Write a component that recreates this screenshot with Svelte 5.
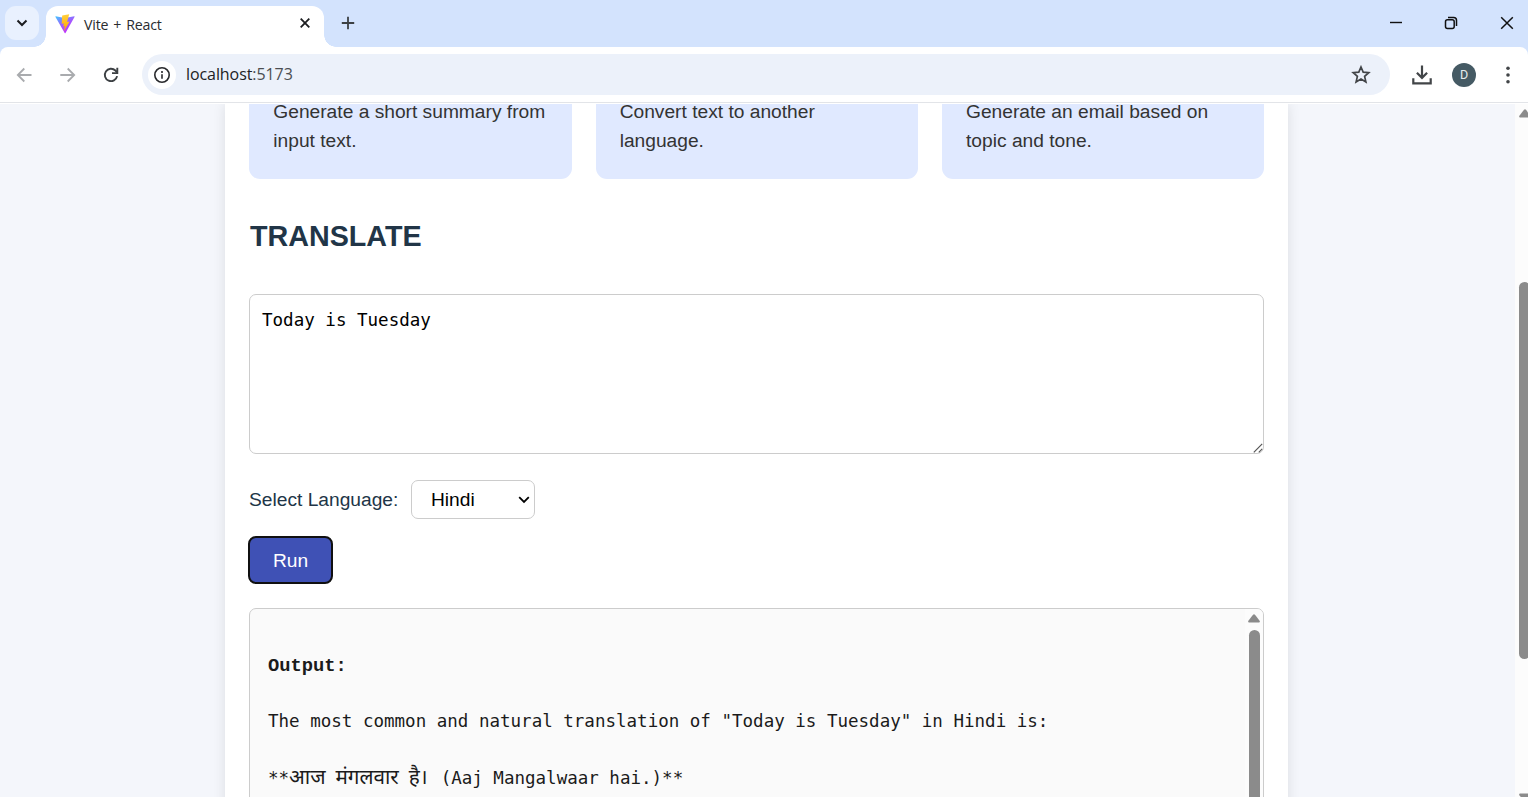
<script>
  const cards = [
    ['Generate a short summary from', 'input text.'],
    ['Convert text to another', 'language.'],
    ['Generate an email based on', 'topic and tone.']
  ];
</script>

<div class="window">
  <header class="tabs">
    <button class="search" aria-label="Search tabs">
      <svg width="12" height="8" viewBox="0 0 12 8"><path d="M1.500 1.500 6 6l4.500-4.500" fill="none" stroke="#1c1d20" stroke-width="2" /></svg>
    </button>
    <div class="tab">
      <svg class="vite" width="20" height="20" viewBox="0 0 20 20">
        <defs>
          <linearGradient id="v" x1="0" y1="0" x2=".6" y2="1"><stop offset="0" stop-color="#41c6ff" /><stop offset=".55" stop-color="#a259ff" /><stop offset="1" stop-color="#c32bff" /></linearGradient>
          <linearGradient id="b" x1="0" y1="0" x2="0" y2="1"><stop offset="0" stop-color="#ffcf3c" /><stop offset="1" stop-color="#ffa800" /></linearGradient>
        </defs>
        <path d="M.7 2.300 9.700 4l9.600-1.700q.5 0 .2.600L10.500 19q-.4.600-.8 0L.5 2.900q-.2-.5.2-.6z" fill="url(#v)" />
        <path d="m14.200.3-7 1.300-.5 8.200 2.200-.4-.7 3.200 1.700-.5-1 5.200 5.700-9.800-2.500.5z" fill="url(#b)" />
      </svg>
      <span class="title">Vite + React</span>
      <svg class="close" width="12" height="12" viewBox="0 0 12 12"><path d="m1.700 1.700 8.600 8.600m0-8.600-8.600 8.600" stroke="#1c1d20" stroke-width="1.800" /></svg>
    </div>
    <svg class="plus" width="14" height="14" viewBox="0 0 14 14"><path d="M7 .8v12.400M.8 7h12.400" stroke="#3c4043" stroke-width="1.800" /></svg>
    <div class="controls">
      <svg width="12" height="14" viewBox="0 0 12 14"><path d="M0 6.500h12" stroke="#111" stroke-width="1.400" /></svg>
      <svg width="14" height="14" viewBox="0 0 14 14" fill="none" stroke="#111" stroke-width="1.500"><rect x="1.500" y="3.700" width="8.700" height="8.700" rx="2" /><path d="M4 1.500h5.700q2.800 0 2.800 2.800V10" /></svg>
      <svg width="14" height="14" viewBox="0 0 14 14"><path d="m1.200 1.200 11.600 11.600m0-11.600L1.200 12.800" stroke="#111" stroke-width="1.500" /></svg>
    </div>
  </header>

  <nav class="toolbar">
    <svg width="16" height="16" viewBox="0 0 16 16" fill="none" stroke="#a9abae" stroke-width="1.800"><path d="M15.500 8H2M8.300 1.500 1.800 8l6.500 6.500" /></svg>
    <svg class="fwd" width="16" height="16" viewBox="0 0 16 16" fill="none" stroke="#a9abae" stroke-width="1.800"><path d="M.3 8H14M7.700 1.500 14.200 8l-6.500 6.500" /></svg>
    <svg class="reload" width="16" height="16" viewBox="0 0 16 16" fill="none" stroke="#3c4043" stroke-width="1.900"><path d="M14.100 9.100A6.200 6.200 0 1 1 12.400 3.500L14.200 5.500" /><path d="M14.300.8v5.300H9" /></svg>
    <div class="address">
      <span class="info"><svg width="18" height="18" viewBox="0 0 18 18"><circle cx="9" cy="9" r="7.200" fill="none" stroke="#28292c" stroke-width="1.600" /><path d="M9 8.200v4.500M9 5.100v1.800" stroke="#28292c" stroke-width="1.600" /></svg></span>
      <span class="url">localhost<span>:5173</span></span>
      <svg class="star" width="20" height="19" viewBox="0 0 20 19"><path d="m10 2 2.200 5.200 5.600.5-4.200 3.700 1.300 5.500-4.900-2.900-4.900 2.900 1.300-5.500-4.200-3.700 5.600-.5z" fill="none" stroke="#424548" stroke-width="1.700" /></svg>
    </div>
    <svg class="download" width="20" height="20" viewBox="0 0 20 20" fill="none" stroke="#424548" stroke-width="2.200"><path d="M10 .5V13M4.900 7.800l5.100 5.100 5.100-5.100M1.300 13.200v5.100h17.400v-5.100" /></svg>
    <span class="avatar">D</span>
    <svg class="dots" width="4" height="18" viewBox="0 0 4 18" fill="#424548"><circle cx="2" cy="2.200" r="1.800" /><circle cx="2" cy="9" r="1.800" /><circle cx="2" cy="15.800" r="1.800" /></svg>
  </nav>

  <div class="page">
    <main>
      <section class="cards">
        {#each cards as card}
          <article>{card[0]}<br />{card[1]}</article>
        {/each}
      </section>
      <h2>TRANSLATE</h2>
      <div class="input">
        <span>Today is Tuesday</span>
        <svg class="grip" width="10" height="10" viewBox="0 0 10 10"><path d="M.8 9.300 9.200.9M5.800 9.300l3.400-3.400" stroke="#555" stroke-width="1.200" /></svg>
      </div>
      <div class="language">
        <span class="label">Select Language:</span>
        <div class="select"><span>Hindi</span><svg width="12" height="8" viewBox="0 0 12 8"><path d="m1.200 1.200 4.800 4.800 4.800-4.800" fill="none" stroke="#000" stroke-width="1.800" /></svg></div>
      </div>
      <button class="run">Run</button>
      <section class="output">
        <div class="result">
          <strong>Output:</strong>
          <p>The most common and natural translation of "Today is Tuesday" in Hindi is:</p>
          <p class="answer">**<span class="hindi">आज मंगलवार है।</span> (Aaj Mangalwaar hai.)**</p>
        </div>
        <div class="inner-scroll">
          <svg width="12" height="9" viewBox="0 0 12 9"><path d="M5 .8q1-1.200 2 0l4.600 6q.8 1.700-.8 1.700H1.200Q-.4 8.500.4 6.800z" fill="#8b8b8b" /></svg>
          <i></i>
        </div>
      </section>
    </main>
    <aside>
      <svg width="12" height="9" viewBox="0 0 12 9"><path d="M5 .8q1-1.200 2 0l4.600 6q.8 1.700-.8 1.700H1.200Q-.4 8.500.4 6.800z" fill="#8b8b8b" /></svg>
      <i></i>
      <svg class="down" width="12" height="9" viewBox="0 0 12 9"><path d="M5 8.200q1 1.200 2 0l4.600-6Q12.400.5 10.800.5H1.200Q-.4.500.4 2.200z" fill="#8b8b8b" /></svg>
    </aside>
  </div>
</div>

<style>
  :global(body) { margin: 0; overflow: hidden; }
  * { box-sizing: border-box; }
  svg { display: block; flex: none; }
  button { border: 0; padding: 0; }
  .window { width: 1528px; height: 797px; overflow: hidden; display: flex; flex-direction: column; background: #d3e3fd; font-family: "Liberation Sans", Arial, sans-serif; }
  .tabs { height: 47px; flex: none; display: flex; background: #d3e3fd; }
  .search { width: 34px; height: 34px; margin: 6px 7px 0 5px; border-radius: 11px; background: #e9f1fe; display: flex; align-items: center; justify-content: center; }
  .tab { position: relative; width: 278px; height: 41px; margin-top: 6px; padding: 0 13px 0 9px; border-radius: 12px 12px 0 0; background: #fff; display: flex; align-items: center; }
  .tab::before, .tab::after { content: ''; position: absolute; bottom: 0; width: 12px; height: 12px; }
  .tab::before { left: -12px; background: radial-gradient(circle at 0 0, transparent 11.5px, #fff 12px); }
  .tab::after { right: -12px; background: radial-gradient(circle at 100% 0, transparent 11.5px, #fff 12px); }
  .vite { margin-top: -6px; }
  .title { margin: -5px 0 0 9px; font: 14.200px "Open Sans", "Noto Sans", sans-serif; color: #2a2c2f; letter-spacing: -.2px; word-spacing: 1.500px; white-space: nowrap; }
  .close { margin: -7px 0 0 auto; }
  .plus { margin: 16px 0 0 17px; }
  .controls { margin: 16px 14.500px 0 auto; display: flex; gap: 42px; }
  .toolbar { height: 56px; flex: none; padding-left: 16px; border-bottom: 1px solid #e2e4e8; border-radius: 8px 8px 0 0; display: flex; align-items: center; background: #fff; }
  .fwd { margin-left: 28px; }
  .reload { margin-left: 27px; }
  .address { width: 1248px; height: 41px; margin-left: 23px; padding: 0 19px 0 6px; border-radius: 21px; background: #ecf1fa; display: flex; align-items: center; }
  .info { width: 28px; height: 28px; border-radius: 50%; background: #fff; display: flex; align-items: center; justify-content: center; }
  .url { margin: -1px 0 0 10px; font: 16px "Open Sans", "Noto Sans", sans-serif; letter-spacing: -.08px; color: #202124; }
  .url span { color: #4b4e52; }
  .star { margin-left: auto; }
  .download { margin-left: 22px; }
  .avatar { width: 24px; height: 24px; margin-left: 20px; border-radius: 50%; background: #455a64; color: #e5eaec; display: flex; align-items: center; justify-content: center; font: 12.500px Roboto, sans-serif; }
  .dots { margin-left: 29.500px; }
  .page { flex: 1; min-height: 0; border-top: 1px solid #fff; display: flex; background: #f4f6fb; overflow: hidden; }
  main { width: 1063px; height: 900px; margin-left: 225px; padding: 0 24px; background: #fff; box-shadow: 0 0 12px rgba(0, 0, 0, .1); }
  .cards { display: grid; grid-template-columns: repeat(3, 1fr); gap: 24px; height: 75px; padding-left: .3px; margin-right: -.4px; }
  article { height: 75px; padding-left: 24px; border-radius: 0 0 11px 11px; background: #e0e9ff; color: #333; font-size: 19.200px; line-height: 28.800px; white-space: nowrap; }
  article::before { content: ''; display: block; margin-top: -6px; }
  h2 { margin: 40px 0 0 1px; height: 34px; font-size: 28.700px; line-height: 34px; color: #213547; }
  .input { position: relative; height: 160px; margin-top: 41px; padding: 14px 12px; border: 1px solid #ccc; border-radius: 7px; font: 17.550px/23px "DejaVu Sans Mono", monospace; color: #000; }
  .grip { position: absolute; right: 0; bottom: 0; }
  .language { display: flex; align-items: center; height: 39px; margin-top: 26px; }
  .label { width: 162px; font-size: 19.200px; color: #213547; white-space: nowrap; }
  .select { width: 124px; height: 39px; padding: 0 4px 0 19px; border: 1px solid #ccc; border-radius: 7px; display: flex; align-items: center; justify-content: space-between; font-size: 19.200px; color: #000; }
  .run { display: block; width: 85px; height: 48px; margin: 17px 0 0 -1px; padding-top: 1px; border: 2px solid #101010; border-radius: 8px; background: #3f51b5; color: #fff; font: 19.200px "Liberation Sans", Arial, sans-serif; }
  .output { height: 300px; margin-top: 24px; border: 1px solid #ccc; border-radius: 7px; background: #fafafa; display: flex; overflow: hidden; color: #1b1b1b; }
  .result { flex: 1; padding: 43px 0 0 18px; font: 17.530px/29px "DejaVu Sans Mono", monospace; white-space: nowrap; }
  strong { display: block; font: bold 18.800px/29px "Liberation Mono", monospace; }
  p { margin: 26px 0 0; height: 29px; }
  .answer { margin-top: 28px; }
  .hindi { font-family: "Noto Sans Devanagari", "Noto Sans", sans-serif; display: inline-block; width: 141px; font-size: 20.700px; line-height: 20px; word-spacing: 4.500px; }
  .inner-scroll { width: 18px; padding: 5px 0 0 3px; background: #fcfcfc; }
  .inner-scroll i { display: block; width: 11px; height: 280px; margin: 7px 0 0 1px; border-radius: 6px; background: #8b8b8b; }
  aside { width: 13px; height: 693px; margin-left: auto; padding: 5px 0 0 4px; background: #fcfcfc; overflow: hidden; }
  aside i { display: block; width: 11px; height: 377px; margin-top: 164px; border-radius: 6px; background: #8b8b8b; }
  .down { margin-top: 134px; }
</style>
